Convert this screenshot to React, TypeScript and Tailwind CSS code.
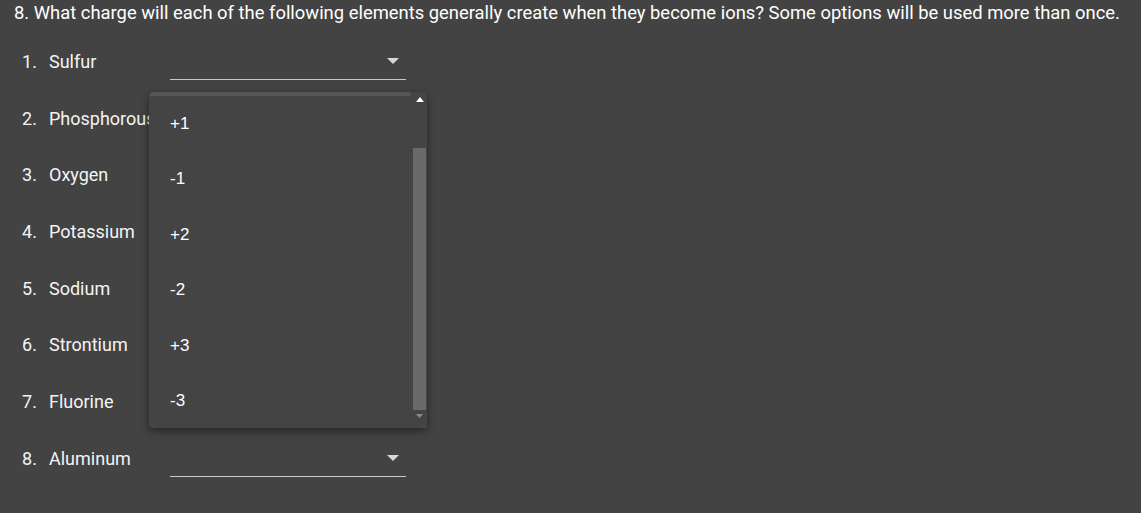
import React from "react";

const elements = ["Sulfur", "Phosphorous", "Oxygen", "Potassium", "Sodium", "Strontium", "Fluorine", "Aluminum"];
const charges = ["+1", "-1", "+2", "-2", "+3", "-3"];

const Caret = ({ className }: { className?: string }) => (
  <svg width="12" height="6" viewBox="0 0 12 6" className={className}>
    <path d="M0 0 L12 0 L6 6 Z" fill="currentColor" />
  </svg>
);

export default function App() {
  return (
    <div className="relative w-full h-screen bg-[#434343] text-white overflow-hidden font-['Roboto',sans-serif]">
      <div className="h-[33px] pl-[14px] pt-[2px] text-[18.4px] leading-[22px] text-white whitespace-nowrap">
        8. What charge will each of the following elements generally create when they become ions? Some options will be used more than once.
      </div>
      <div className="flex flex-col">
        {elements.map((name, i) => (
          <div key={name} className="h-[56.7px] flex items-center">
            <div className="w-[148px] shrink-0 pl-[22px] flex text-[18px] text-[#f4f4f4] whitespace-nowrap">
              <span className="w-[27px] shrink-0">{i + 1}.</span>
              <span>{name}</span>
            </div>
            {(i === 0 || i === 7) && (
              <div className="ml-[22px] w-[236px] h-[36px] mt-[1px] border-b border-[#c8c8c8] flex items-center justify-end pr-[7px]">
                <Caret className="text-[#d8d8d8]" />
              </div>
            )}
          </div>
        ))}
      </div>

      {/* open option menu */}
      <div className="absolute left-[149px] top-[92px] w-[278px] h-[336px] bg-[#444444] rounded-[3px] shadow-[0_3px_8px_rgba(0,0,0,0.45)] flex">
        <div className="flex-1 relative">
          <div className="absolute left-[1px] right-[1px] top-[0px] h-[4px] bg-[#555555] rounded-t-[3px]" />
          <div className="flex flex-col pt-[4px] pl-[21px] font-['Liberation_Sans',Arial,sans-serif] text-[17px] text-white">
            {charges.map((c) => (
              <div key={c} className="h-[55.4px] flex items-center">
                {c}
              </div>
            ))}
          </div>
        </div>
        <div className="w-[15px] flex flex-col items-center pt-[5px] pb-[5px] bg-[#444444]">
          <svg width="8" height="5" viewBox="0 0 8 5" className="text-white">
            <path d="M0 5 L8 5 L4 0 Z" fill="currentColor" />
          </svg>
          <div className="mt-[46px] w-[13px] h-[262px] bg-[#6a6a6a]" />
          <svg width="7" height="4" viewBox="0 0 7 4" className="mt-[4px] text-[#8a8a8a]">
            <path d="M0 0 L7 0 L3.5 4 Z" fill="currentColor" />
          </svg>
        </div>
      </div>
    </div>
  );
}
